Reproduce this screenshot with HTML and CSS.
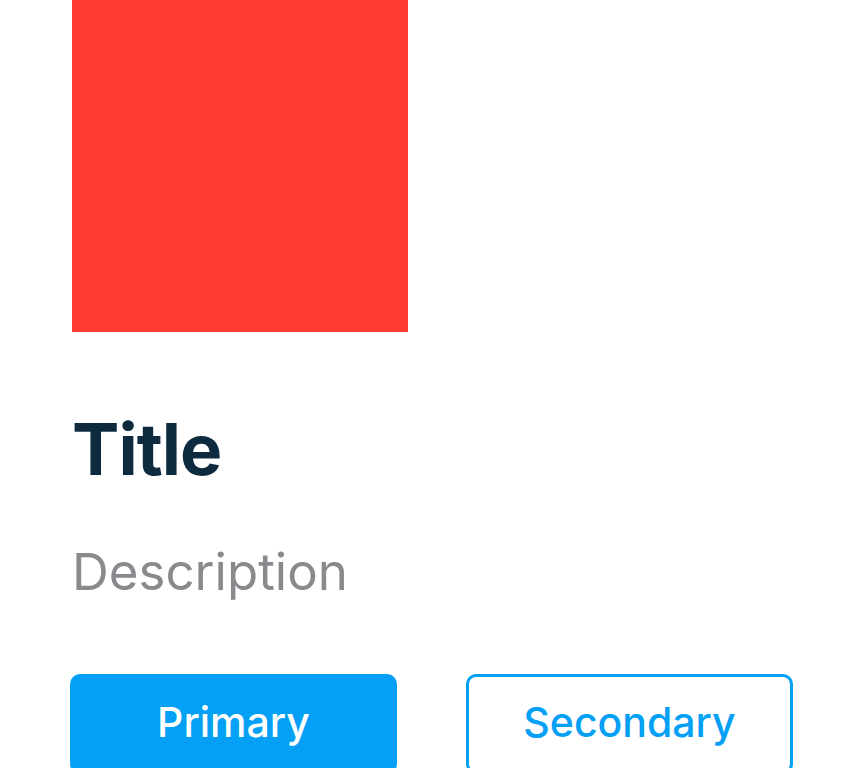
FILE: index.html
```html
<!DOCTYPE html>
<html>
<head>
<meta charset="utf-8">
<link rel="stylesheet" href="styles.css">
</head>
<body>
<main class="screen">
  <div class="content">
    <div class="swatch"></div>
    <h1 class="title">Title</h1>
    <p class="description">Description</p>
  </div>
  <div class="actions">
    <button class="btn btn-primary">Primary</button>
    <button class="btn btn-secondary">Secondary</button>
  </div>
</main>
</body>
</html>
```
FILE: styles.css
```css
html, body {
  margin: 0;
  padding: 0;
  background: #ffffff;
}
body {
  font-family: Inter, "Noto Sans", "Liberation Sans", sans-serif;
  width: 864px;
  height: 768px;
  overflow: hidden;
}
.screen {
  display: flex;
  flex-direction: column;
  padding: 0 71px 0 70px;
}
.content {
  display: flex;
  flex-direction: column;
  margin-left: 2px;
}
.swatch {
  width: 336px;
  height: 332px;
  background: #ff3b30;
}
.title {
  margin: 82px 0 0;
  font-size: 71px;
  line-height: 71px;
  font-weight: 700;
  color: #0e2a3e;
  letter-spacing: -1px;
}
.description {
  margin: 61px 0 0;
  font-size: 51px;
  line-height: 51px;
  font-weight: 400;
  color: #8a8a8e;
}
.actions {
  margin-top: 77px;
  display: grid;
  grid-template-columns: 1fr 1fr;
  gap: 69px;
}
.btn {
  height: 100px;
  border-radius: 10px;
  font-family: inherit;
  font-size: 41px;
  font-weight: 500;
  display: flex;
  align-items: center;
  justify-content: center;
  padding: 0 0 4px;
  box-sizing: border-box;
}
.btn-primary {
  background: #03a0f5;
  color: #ffffff;
  border: none;
}
.btn-secondary {
  background: #ffffff;
  color: #03a0f5;
  border: 3px solid #03a0f5;
}
```
